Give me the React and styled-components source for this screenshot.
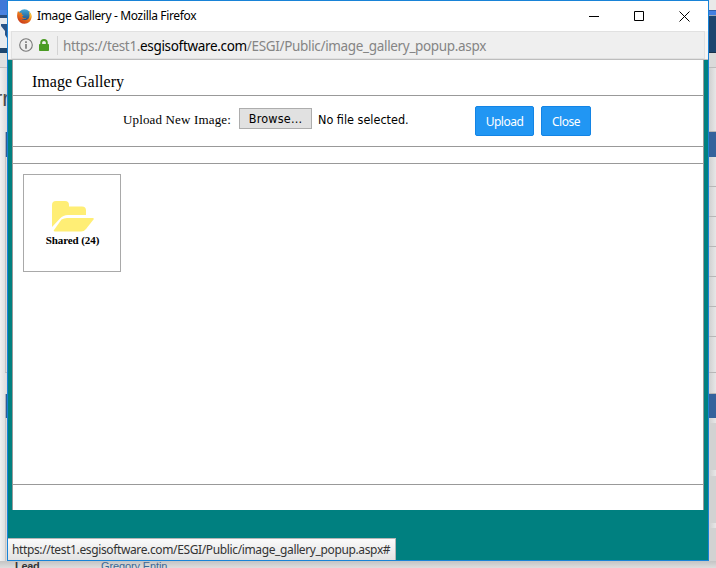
import React from "react";
import styled, { createGlobalStyle } from "styled-components";

const Global = createGlobalStyle`
  * { box-sizing: border-box; }
  html, body { margin: 0; overflow: hidden; }
`;

const ui = `"Noto Sans", "Open Sans", sans-serif`;
const serif = `"Liberation Serif", "Times New Roman", serif`;
const tahoma = `"DejaVu Sans Condensed", "DejaVu Sans", sans-serif`;

const Desktop = styled.div`
  display: grid;
  grid-template-columns: 7px 702px 7px;
  grid-template-rows: 561px 7px;
  width: 716px;
  height: 568px;
  overflow: hidden;
  background: #dedede;
`;

const Strip = styled.div`
  display: flex;
  flex-direction: column;
  overflow: hidden;
  min-width: 0;
  background: ${(p) => (p.$side === "left" ? "linear-gradient(90deg, #f1f1f1, #dadada)" : "linear-gradient(90deg, #d0d0d0, #e7e7e7)")};
`;

const Band = styled.div`
  flex: none;
  height: ${(p) => p.$h}px;
  margin-left: ${(p) => p.$inset || 0}px;
  background: ${(p) => p.$c || "transparent"};
  border-left: ${(p) => (p.$edge ? `1px solid ${p.$edge}` : "0")};
  overflow: hidden;
`;

const Clipped = styled.div`
  font: 22px/24px "Liberation Sans", sans-serif;
  color: #4b4b4b;
  white-space: nowrap;
  margin-left: -5px;
`;

const BottomStrip = styled.div`
  grid-column: 1 / -1;
  display: flex;
  overflow: hidden;
  padding-left: 15px;
  background: linear-gradient(#c4c4c4, #dedede);
  font: 11px/12px "Liberation Sans", sans-serif;
`;

const Lead = styled.span`
  width: 86px;
  margin-top: -1px;
  font-weight: bold;
  letter-spacing: -0.3px;
  color: #333;
`;

const Person = styled.span`
  margin-top: -1px;
  letter-spacing: -0.12px;
  color: #3c6792;
`;

const Window = styled.main`
  position: relative;
  display: flex;
  flex-direction: column;
  border: 1px solid #1883d7;
  background: #008080;
`;

const TitleBar = styled.header`
  display: flex;
  align-items: center;
  height: 30px;
  flex: none;
  padding: 0 18px 0 9px;
  background: #fff;
`;

const WindowTitle = styled.span`
  margin-left: 5px;
  flex: 1;
  font: 12px/16px ${ui};
  letter-spacing: -0.35px;
  color: #000;
`;

const Controls = styled.div`
  display: flex;
  gap: 35px;
`;

const AddressArea = styled.div`
  height: 29px;
  flex: none;
  padding: 0 3px;
  background: #f5f5f5;
  border-bottom: 1px solid #bdbdbd;
`;

const AddressBar = styled.div`
  display: flex;
  align-items: center;
  height: 28px;
  padding-left: 7px;
  border: 1px solid #e1e1e1;
  background: #efefef;
`;

const Divider = styled.i`
  width: 1px;
  height: 19px;
  margin: 0 5px 0 8px;
  background: #d3d3d3;
`;

const Url = styled.span`
  font: 13.5px/20px ${ui};
  letter-spacing: -0.33px;
  padding-top: 2px;
  white-space: pre;
  color: #858585;
  b { font-weight: normal; color: #000; }
`;

const Page = styled.section`
  display: flex;
  flex-direction: column;
  height: 450px;
  margin: 0 4px;
  background: #fff;
  border: solid #999;
  border-width: 0 1px;
`;

const Heading = styled.h1`
  height: 36px;
  flex: none;
  margin: 0;
  padding: 12px 0 0 19px;
  border-bottom: 1px solid #999;
  font: 16px/20px ${serif};
  color: #000;
`;

const UploadRow = styled.div`
  display: flex;
  align-items: flex-start;
  height: 51px;
  flex: none;
  padding: 10px 0 0 110px;
  border-bottom: 1px solid #999;
`;

const UploadLabel = styled.label`
  width: 116px;
  padding-top: 5px;
  font: 13px/18px ${serif};
  letter-spacing: 0.15px;
`;

const BrowseButton = styled.button`
  width: 73px;
  height: 21px;
  margin-top: 2px;
  padding: 1px 0 0;
  border: 1px solid #adadad;
  background: #e1e1e1;
  font: 12.5px/18px ${tahoma};
  letter-spacing: 0.2px;
`;

const FileStatus = styled.span`
  width: 163px;
  padding: 5px 0 0 6px;
  font: 12.5px/18px ${tahoma};
`;

const ActionButton = styled.button`
  width: ${(p) => p.$w}px;
  height: 30px;
  margin-right: 7px;
  padding: 2px 0 0;
  border: 1px solid #1384e5;
  border-radius: 2px;
  background: #2196f3;
  color: #fff;
  font: 12px/26px ${ui};
  letter-spacing: -0.5px;
`;

const Spacer = styled.div`
  height: 17px;
  flex: none;
  border-bottom: 1px solid #999;
`;

const Gallery = styled.div`
  height: 321px;
  flex: none;
  padding: 10px;
  border-bottom: 1px solid #999;
`;

const FolderTile = styled.div`
  display: flex;
  flex-direction: column;
  align-items: center;
  width: 98px;
  height: 98px;
  padding: 26px 0 0 1px;
  border: 1px solid #a9a9a9;
`;

const FolderName = styled.span`
  font: bold 11px/13px ${serif};
  letter-spacing: -0.1px;
  margin-top: 2px;
  white-space: nowrap;
`;

const StatusTip = styled.div`
  position: absolute;
  left: 0;
  bottom: 0;
  width: 388px;
  height: 22px;
  padding: 2px 0 0 4px;
  border: solid #b5b5b5;
  border-width: 1px 1px 0 0;
  background: linear-gradient(#fafafa, #e3e3e3);
  font: 12px/17px ${ui};
  letter-spacing: -0.37px;
  white-space: nowrap;
  color: #333;
`;

const Firefox = () => (
  <svg width="15" height="15" viewBox="0 0 15 15">
    <defs>
      <linearGradient id="fox" x1="1" y1="0" x2="0.3" y2="1">
        <stop offset="0" stopColor="#ffd53d" />
        <stop offset=".4" stopColor="#f28a1c" />
        <stop offset="1" stopColor="#c8361a" />
      </linearGradient>
      <linearGradient id="globe" x1="0" y1="0" x2="0" y2="1">
        <stop offset="0" stopColor="#45a8d7" />
        <stop offset="1" stopColor="#183f7b" />
      </linearGradient>
    </defs>
    <circle cx="7.5" cy="6.8" r="6.5" fill="url(#globe)" />
    <path d="M1 2 2.600 3.700l2.100.1.1 1.600 1.900.8-1.500 1c.2 2.100 2.800 2.500 4.300 1.300-.6 1.900-3.500 2.200-5 1 1.700 2.300 6 1.900 7.500-.8 1-1.900.8-4.200-.3-6.100C14 4 15 6 14.600 8.600A7.200 7.200 0 0 1 .4 9C-.2 6.500.2 3.800 1 2Z" fill="url(#fox)" />
    <path d="M12 2.500c1.800 2 2.300 5.200.5 7.600.6-2.700.4-5.300-.5-7.600Z" fill="#ffdb48" />
  </svg>
);

const Info = () => (
  <svg width="14" height="14" viewBox="0 0 14 14" fill="none" stroke="#777">
    <circle cx="7" cy="7" r="6.3" strokeWidth="1.1" />
    <path d="M7 3.200v1.700M7 6v4.800" strokeWidth="1.6" />
  </svg>
);

const Lock = styled(({ className }) => (
  <svg className={className} width="10" height="12" viewBox="0 0 10 12">
    <path d="M2.200 6V3.600a2.800 2.600 0 0 1 5.600 0V6" fill="none" stroke="#4a9b23" strokeWidth="1.9" />
    <rect y="5" width="10" height="7" rx=".8" fill="#4a9b23" />
  </svg>
))`
  margin-left: 6px;
`;

const ControlIcon = ({ d, w }) => (
  <svg width={w} height="11" viewBox={`0 0 ${w} 11`} fill="none" stroke="#000">
    <path d={d} />
  </svg>
);

const Folder = () => (
  <svg width="42" height="31" viewBox="0 0 42 31" fill="#ffee75">
    <path d="M0 26V4Q0 0 4 0h9q4 0 4 4v1.500h13q4 0 4 4V14H16q-5 0-8 3.500Z" />
    <path d="M9.500 18.500Q12 17 15 17h25.500q2 0 1 1.500L34 28q-2 2.500-5 2.500H3q-2 0-1-1.500Z" />
  </svg>
);

const Sash = styled.svg`
  display: block;
`;

const gridLine = "#b7b7b7";

export default function App() {
  return (
    <>
      <Global />
      <Desktop>
        <Strip $side="left">
          <Band $h={10} $c="#4078d8" />
          <Band $h={5} $c="#4b83e0" />
          <Band $h={3} $c="#294f80" />
          <Band $h={30} $c="#e7ebef">
            <Sash width="7" height="30" viewBox="0 0 7 30">
              <path d="M1 6h6v14L5 17V13L1 8Z" fill="#27548a" />
            </Sash>
          </Band>
          <Band $h={5} $c="#1e466f" />
          <Band $h={14} $c="#e1e1e1" />
          <Band $h={1} $c="#c1c1c1" />
          <Band $h={19} />
          <Band $h={25}><Clipped>rr</Clipped></Band>
          <Band $h={20} />
          <Band $h={25} $c="#2b5c96" $inset={5} $edge="#a6b2c0" />
          <Band $h={215} $c="#dcdcdc" $inset={5} $edge="#c4c4c4" />
          <Band $h={1} $c="#bcbcbc" $inset={5} />
          <Band $h={21} />
          <Band $h={24} $c="#2b5c96" $inset={5} $edge="#a6b2c0" />
          <Band $h={143} $c="#dadada" $inset={5} $edge="#c7c7c7" />
        </Strip>

        <Window>
          <TitleBar>
            <Firefox />
            <WindowTitle>Image Gallery - Mozilla Firefox</WindowTitle>
            <Controls>
              <ControlIcon w={10} d="M0 5.500h10" />
              <ControlIcon w={10} d="M.5.5h9v9h-9Z" />
              <ControlIcon w={11} d="m.5.5 10 10m0-10-10 10" />
            </Controls>
          </TitleBar>
          <AddressArea>
            <AddressBar>
              <Info />
              <Lock />
              <Divider />
              <Url>https://test1.<b>esgisoftware.com</b>/ESGI/Public/image_gallery_popup.aspx</Url>
            </AddressBar>
          </AddressArea>
          <Page>
            <Heading>Image Gallery</Heading>
            <UploadRow>
              <UploadLabel>Upload New Image:</UploadLabel>
              <BrowseButton>Browse...</BrowseButton>
              <FileStatus>No file selected.</FileStatus>
              <ActionButton $w={59}>Upload</ActionButton>
              <ActionButton $w={50}>Close</ActionButton>
            </UploadRow>
            <Spacer />
            <Gallery>
              <FolderTile>
                <Folder />
                <FolderName>Shared (24)</FolderName>
              </FolderTile>
            </Gallery>
          </Page>
          <StatusTip>https://test1.esgisoftware.com/ESGI/Public/image_gallery_popup.aspx#</StatusTip>
        </Window>

        <Strip $side="right">
          <Band $h={10} $c="#e9e9e9" />
          <Band $h={1} $c="#315faa" />
          <Band $h={4} $c="#4380e2" />
          <Band $h={1} $c="#9baabd" />
          <Band $h={36} $c="#1d456f" />
          <Band $h={1} $c="#152f4b" />
          <Band $h={14} $c="#dadada" />
          <Band $h={1} $c="#bcbcbc" />
          <Band $h={63} />
          <Band $h={1} $c={gridLine} />
          <Band $h={25} $c="#34639c" />
          {[29, 29, 29, 29, 29, 29, 35, 20].map((h, i) => (
            <React.Fragment key={i}>
              <Band $h={h} />
              <Band $h={1} $c={gridLine} />
            </React.Fragment>
          ))}
          <Band $h={24} $c="#34639c" />
          <Band $h={5} />
          <Band $h={47} $c="#d2d2d2" />
          <Band $h={6} />
          <Band $h={47} $c="#d2d2d2" />
          <Band $h={5} />
          <Band $h={33} $c="#d2d2d2" />
        </Strip>

        <BottomStrip>
          <Lead>Lead</Lead>
          <Person>Gregory Entin</Person>
        </BottomStrip>
      </Desktop>
    </>
  );
}
